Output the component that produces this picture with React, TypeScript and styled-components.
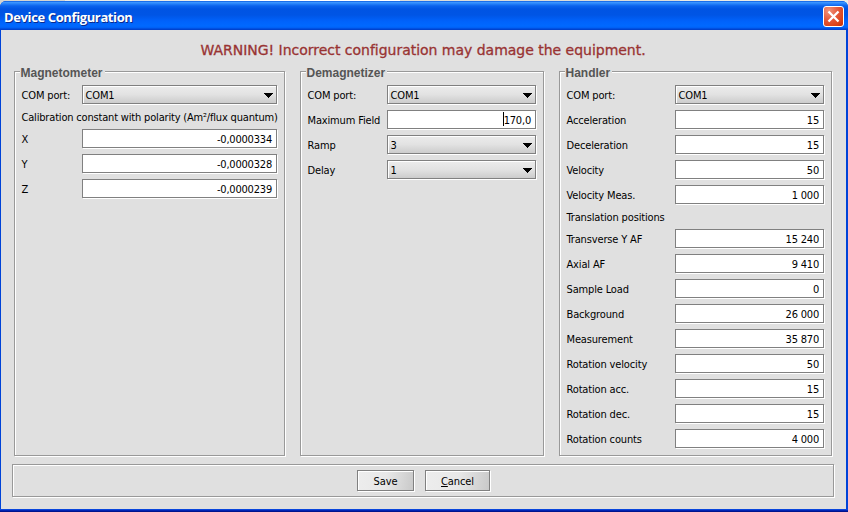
import React from 'react';
import styled, { createGlobalStyle } from 'styled-components';

const Global = createGlobalStyle`
  * { box-sizing: border-box; }
  body { margin: 0; overflow: hidden; }
`;

const ui = '"DejaVu Sans Condensed", "DejaVu Sans", sans-serif';

const Desktop = styled.div`
  width: 848px;
  height: 512px;
  padding-top: 1px;
  background: linear-gradient(90deg, #d4d4d0 0 65px, #ecebe4 65px 200px, #fff 200px 400px, #dcdcd8 400px 680px, #ecebe4 680px);
`;

const Dialog = styled.div`
  display: flex;
  flex-direction: column;
  width: 848px;
  height: 511px;
  border-radius: 6px 6px 0 0;
  overflow: hidden;
  background: #0043d8;
`;

const TitleBar = styled.header`
  display: flex;
  align-items: center;
  justify-content: space-between;
  height: 29px;
  flex: none;
  padding: 2px 4px 0 4px;
  background: linear-gradient(180deg, #0a5be0 0, #3a94ff 1.5px, #2a86fb 2.5px, #0a62ec 5px, #0054e3 8px, #0055e5 14px, #0062fb 20px, #0069ff 25px, #0061f6 26.5px, #0048d8 28px, #003cc4 29px);
`;

const Title = styled.h1`
  margin: 0;
  font: bold 13px/20px "Open Sans", "Noto Sans", sans-serif;
  letter-spacing: -0.38px;
  color: #fff;
  text-shadow: 1px 1px 0 #0a2a8c;
`;

const CloseButton = styled.button`
  display: flex;
  align-items: center;
  justify-content: center;
  width: 21px;
  height: 21px;
  padding: 0;
  border: 1px solid #fff;
  border-radius: 3px;
  background: radial-gradient(circle at 25% 20%, #f0937a 0, #e4583a 45%, #dc4318 75%, #c03008 100%);
`;

const Body = styled.main`
  display: flex;
  flex-direction: column;
  flex: 1;
  margin: 0 2px 0 1px;
  padding: 0 12px 0 11px;
  background: #e0e0e0;
`;

const Frame = styled.div`
  height: 3px;
  flex: none;
  background: linear-gradient(180deg, #0a46dc 0 1px, #0024b4 1px 2px, #00138c 2px);
`;

const Warning = styled.p`
  margin: 10px 0 0;
  height: 31px;
  text-align: center;
  font: 14px/20px "DejaVu Sans", sans-serif;
  letter-spacing: -0.02px;
  -webkit-text-stroke: 0.3px #993333;
  color: #993333;
`;

const Etched = styled.section`
  position: relative;
  border: 1px solid #999;
  box-shadow: 1px 1px 0 #fff, inset 1px 1px 0 #fff;
`;

const Groups = styled.div`
  display: flex;
  gap: 15px;
  padding-left: 2px;
`;

const Group = styled(Etched)<{ $width: number }>`
  display: flex;
  flex-direction: column;
  gap: 6px;
  width: ${(p) => p.$width}px;
  height: 385px;
  padding: 13px 7px 0 6px;
`;

const Legend = styled.h2`
  position: absolute;
  top: -6px;
  left: 5px;
  margin: 0;
  padding: 0 2px 0 0.5px;
  font: bold 12px/14px "Liberation Sans", Arial, sans-serif;
  color: #555;
  background: #e0e0e0;
`;

const Row = styled.div<{ $control: number }>`
  display: grid;
  grid-template-columns: 1fr ${(p) => p.$control}px;
  grid-template-rows: 19px;
  height: 19px;
`;

const Label = styled.span`
  padding-left: 0.5px;
  font: 11px/22px ${ui};
  letter-spacing: -0.15px;
  color: #000;
  white-space: nowrap;
`;

const Caption = styled.div<{ $track: number }>`
  height: 13px;
  padding-left: 0.5px;
  font: 11px/16px ${ui};
  letter-spacing: ${(p) => p.$track}px;
  color: #000;
  white-space: nowrap;
`;

const Field = styled.div`
  display: flex;
  align-items: center;
  justify-content: flex-end;
  border: 1px solid #808080;
  padding: 3px 4px 0;
  background: #fff;
  box-shadow: 1px 1px 0 #fff;
  font: 11px/14px ${ui};
  letter-spacing: -0.2px;
  color: #000;
`;

const Caret = styled.span`
  width: 1px;
  height: 14px;
  margin-top: -4px;
  background: #000;
`;

const Combo = styled.div`
  display: flex;
  align-items: center;
  justify-content: space-between;
  border: 1px solid #808080;
  padding: 3px 3px 0 2.5px;
  background: linear-gradient(180deg, #ececec, #e2e2e2 50%, #cccccc);
  box-shadow: 1px 1px 0 #fff, inset 1px 1px 0 #fff;
  font: 11px/14px ${ui};
  letter-spacing: -0.15px;
  color: #000;
`;

const ArrowIcon = styled.svg`
  margin-top: -1px;
`;

const Actions = styled(Etched)`
  display: flex;
  justify-content: center;
  gap: 11px;
  height: 33px;
  margin-top: 8px;
  padding: 5px 0 0 1px;
`;

const Button = styled.button<{ $width: number }>`
  width: ${(p) => p.$width}px;
  height: 21px;
  padding: 2px 0 0;
  border: 1px solid #808080;
  border-radius: 0;
  background: linear-gradient(100deg, #ededed 0, #e8e8e8 50%, #c9c9c9 100%);
  box-shadow: 1px 1px 0 #fff, inset 1px 1px 0 #fff;
  font: 11px/17px ${ui};
  letter-spacing: -0.1px;
  color: #000;
`;

const Mnemonic = styled.u`
  text-underline-offset: 1px;
`;

type Item =
  | { kind: 'combo'; label: string; value: string }
  | { kind: 'field'; label: string; value: string; focused?: boolean }
  | { kind: 'caption'; label: string; track?: number };

const combo = (label: string, value: string): Item => ({ kind: 'combo', label, value });
const field = (label: string, value: string, focused = false): Item => ({ kind: 'field', label, value, focused });

const groups: { title: string; width: number; control: number; items: Item[] }[] = [
  {
    title: 'Magnetometer',
    width: 271,
    control: 195,
    items: [
      combo('COM port:', 'COM1'),
      { kind: 'caption', label: 'Calibration constant with polarity (Am²/flux quantum)', track: -0.18 },
      field('X', '-0,0000334'),
      field('Y', '-0,0000328'),
      field('Z', '-0,0000239'),
    ],
  },
  {
    title: 'Demagnetizer',
    width: 244,
    control: 149,
    items: [
      combo('COM port:', 'COM1'),
      field('Maximum Field', '170,0', true),
      combo('Ramp', '3'),
      combo('Delay', '1'),
    ],
  },
  {
    title: 'Handler',
    width: 273,
    control: 149,
    items: [
      combo('COM port:', 'COM1'),
      field('Acceleration', '15'),
      field('Deceleration', '15'),
      field('Velocity', '50'),
      field('Velocity Meas.', '1 000'),
      { kind: 'caption', label: 'Translation positions' },
      field('Transverse Y AF', '15 240'),
      field('Axial AF', '9 410'),
      field('Sample Load', '0'),
      field('Background', '26 000'),
      field('Measurement', '35 870'),
      field('Rotation velocity', '50'),
      field('Rotation acc.', '15'),
      field('Rotation dec.', '15'),
      field('Rotation counts', '4 000'),
    ],
  },
];

const Arrow = () => (
  <ArrowIcon width="9" height="5" viewBox="0 0 9 5" shapeRendering="crispEdges">
    <path d="M0 0h9v1H8v1H7v1H6v1H5v1H4V4H3V3H2V2H1V1H0z" />
  </ArrowIcon>
);

function Entry({ item, control }: { item: Item; control: number }) {
  if (item.kind === 'caption') return <Caption $track={item.track ?? -0.15}>{item.label}</Caption>;
  return (
    <Row $control={control}>
      <Label>{item.label}</Label>
      {item.kind === 'combo' ? (
        <Combo>
          {item.value}
          <Arrow />
        </Combo>
      ) : (
        <Field>
          {item.focused && <Caret />}
          {item.value}
        </Field>
      )}
    </Row>
  );
}

export default function App() {
  return (
    <Desktop>
      <Global />
      <Dialog>
        <TitleBar>
          <Title>Device Configuration</Title>
          <CloseButton aria-label="Close">
            <svg width="13" height="13" viewBox="0 0 13 13">
              <path d="M1.5 1.5l10 10M11.5 1.5l-10 10" stroke="#fff" strokeWidth="2.3" />
            </svg>
          </CloseButton>
        </TitleBar>
        <Body>
          <Warning>WARNING! Incorrect configuration may damage the equipment.</Warning>
          <Groups>
            {groups.map((g) => (
              <Group key={g.title} $width={g.width}>
                <Legend>{g.title}</Legend>
                {g.items.map((item) => (
                  <Entry key={item.label} item={item} control={g.control} />
                ))}
              </Group>
            ))}
          </Groups>
          <Actions>
            <Button $width={57}>Save</Button>
            <Button $width={65}>
              <Mnemonic>C</Mnemonic>ancel
            </Button>
          </Actions>
        </Body>
        <Frame />
      </Dialog>
    </Desktop>
  );
}
